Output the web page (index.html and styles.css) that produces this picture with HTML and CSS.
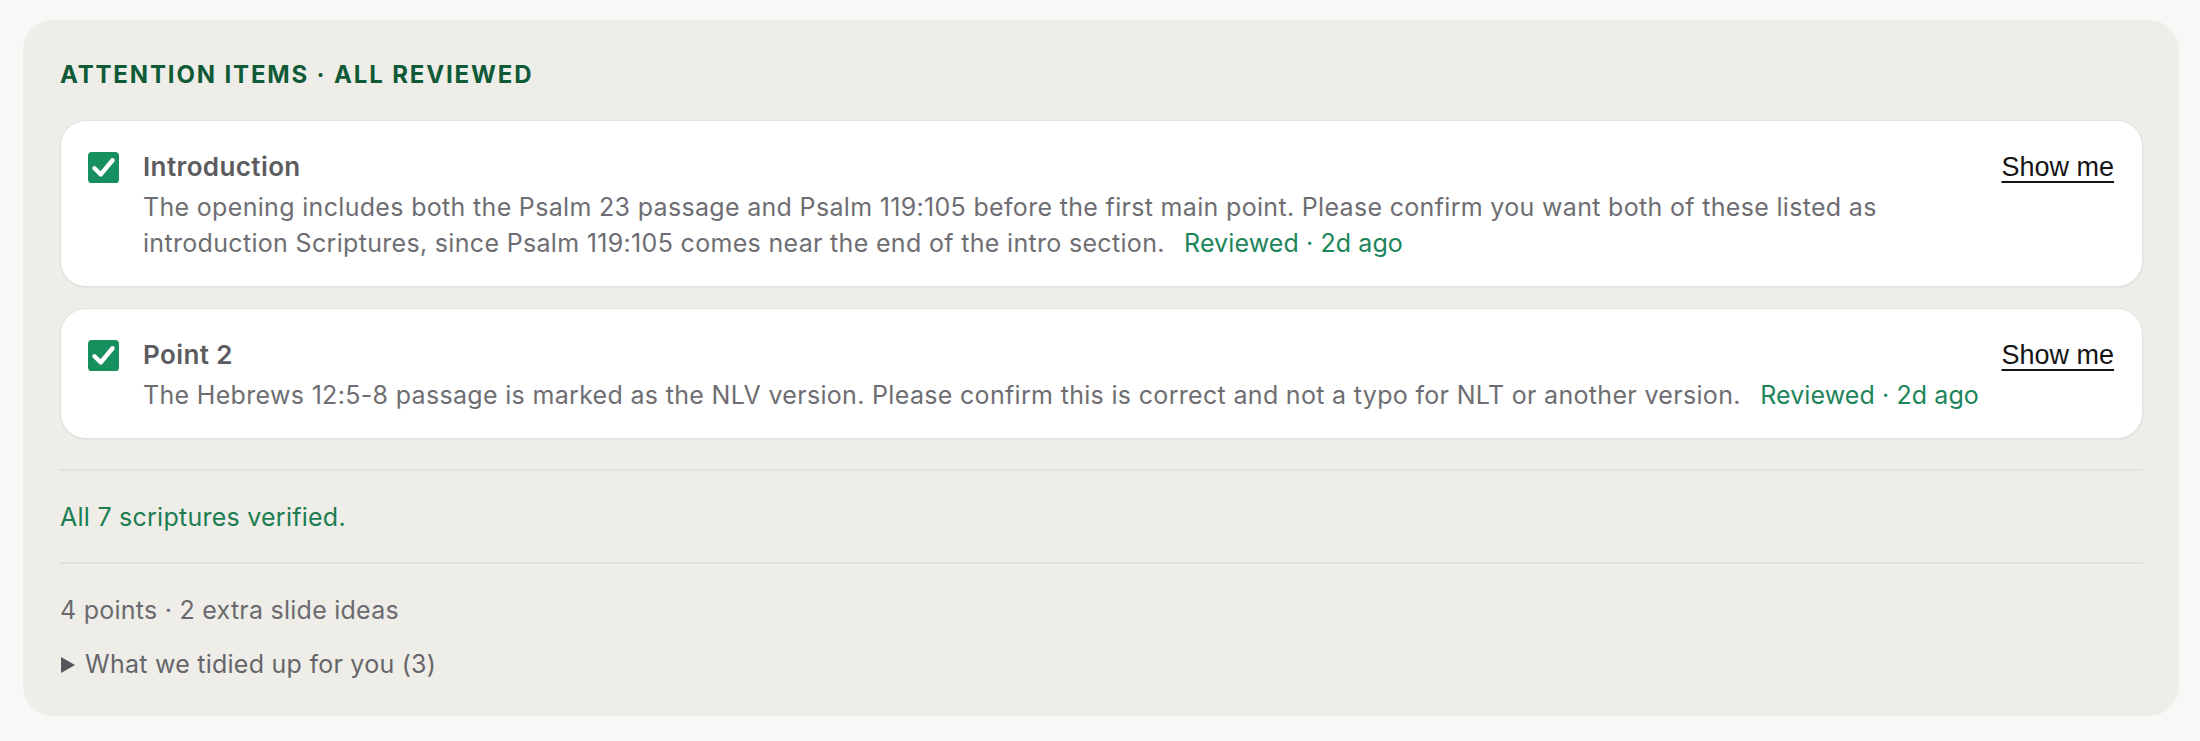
FILE: index.html
```html
<!DOCTYPE html>
<html lang="en">
<head>
<meta charset="utf-8">
<title>Attention items</title>
<link rel="stylesheet" href="styles.css">
</head>
<body>
<section class="panel">
  <h2 class="panel-title">ATTENTION ITEMS · ALL REVIEWED</h2>
  <div class="items">
    <article class="item">
      <span class="check" aria-hidden="true">
        <svg viewBox="0 0 24 24" width="31" height="31"><rect x="0" y="0" width="24" height="24" rx="3" fill="#16905e"/><path d="M5 12.6 L9.9 17.4 L19 6.4" fill="none" stroke="#fff" stroke-width="3.4" stroke-linecap="round" stroke-linejoin="round"/></svg>
      </span>
      <div class="item-body">
        <div class="item-title">Introduction</div>
        <p class="item-text">The opening includes both the Psalm 23 passage and Psalm 119:105 before the first main point. Please confirm you want both of these listed as introduction Scriptures, since Psalm 119:105 comes near the end of the intro section. <span class="reviewed">Reviewed · 2d ago</span></p>
      </div>
      <button class="show-me" type="button">Show me</button>
    </article>
    <article class="item">
      <span class="check" aria-hidden="true">
        <svg viewBox="0 0 24 24" width="31" height="31"><rect x="0" y="0" width="24" height="24" rx="3" fill="#16905e"/><path d="M5 12.6 L9.9 17.4 L19 6.4" fill="none" stroke="#fff" stroke-width="3.4" stroke-linecap="round" stroke-linejoin="round"/></svg>
      </span>
      <div class="item-body">
        <div class="item-title">Point 2</div>
        <p class="item-text">The Hebrews 12:5-8 passage is marked as the NLV version. Please confirm this is correct and not a typo for NLT or another version. <span class="reviewed">Reviewed · 2d ago</span></p>
      </div>
      <button class="show-me" type="button">Show me</button>
    </article>
  </div>
  <div class="verified">All 7 scriptures verified.</div>
  <div class="summary-block">
    <div class="counts">4 points · 2 extra slide ideas</div>
    <details class="tidy">
      <summary>What we tidied up for you (3)</summary>
    </details>
  </div>
</section>
</body>
</html>
```

FILE: styles.css
```css
* { box-sizing: border-box; }

html, body {
  margin: 0;
  background: #f8f8f6;
}

body {
  padding: 20px 21px 25px 23px;
  font-family: Inter, "Noto Sans", sans-serif;
  color: #6b6b6e;
}

.panel {
  background: #eeede8;
  border-radius: 30px;
  padding: 40px 36px 34px 37px;
}

.panel-title {
  margin: 0 0 30px;
  font-size: 24px;
  line-height: 30px;
  font-weight: 700;
  letter-spacing: 1.85px;
  color: #0f5a37;
}

.items {
  display: flex;
  flex-direction: column;
  gap: 21px;
}

.item {
  display: flex;
  align-items: flex-start;
  background: #ffffff;
  border: 1px solid #e2e1dc;
  border-radius: 26px;
  box-shadow: 0 1px 2px rgba(0, 0, 0, 0.05);
  padding: 28px 28px 25px 27px;
}

.check {
  flex: none;
  display: block;
  width: 31px;
  height: 31px;
  margin-top: 3px;
  margin-right: 24px;
}

.check svg { display: block; }

.item-body {
  flex: 1;
  min-width: 0;
  padding-right: 16px;
}

.item-title {
  font-size: 26px;
  line-height: 36px;
  font-weight: 600;
  letter-spacing: 0.4px;
  color: #5b5b60;
  margin-bottom: 4px;
}

.item-text {
  margin: 0;
  font-size: 25px;
  line-height: 36px;
  letter-spacing: 0.32px;
  color: #6e6e72;
}

.reviewed {
  margin-left: 12px;
  letter-spacing: 0.1px;
  white-space: nowrap;
  color: #1c855a;
}

.show-me {
  flex: none;
  background: none;
  border: 0;
  padding: 0;
  font-family: "Liberation Sans", Arial, sans-serif;
  font-size: 27px;
  line-height: 36px;
  color: #141414;
  text-decoration: underline;
  text-decoration-thickness: 2px;
  text-underline-offset: 5px;
  cursor: pointer;
}

.verified {
  margin-top: 30px;
  border-top: 2px solid #e2e1db;
  border-bottom: 2px solid #e2e1db;
  padding: 28px 0 27px;
  font-size: 25px;
  line-height: 36px;
  letter-spacing: 0.25px;
  color: #1c7d52;
}

.summary-block {
  padding-top: 28px;
}

.counts {
  font-size: 25px;
  line-height: 36px;
  letter-spacing: 0.25px;
  color: #6b6b6f;
}

.tidy {
  margin-top: 18px;
}

.tidy summary {
  display: flex;
  align-items: center;
  gap: 10px;
  list-style: none;
  font-size: 25px;
  line-height: 36px;
  letter-spacing: 0.25px;
  color: #66666a;
  cursor: pointer;
}

.tidy summary::-webkit-details-marker { display: none; }

.tidy summary::before {
  content: "";
  flex: none;
  width: 0;
  height: 0;
  margin-left: 1px;
  margin-top: 2px;
  border-top: 8px solid transparent;
  border-bottom: 8px solid transparent;
  border-left: 14px solid #55555b;
}
```
